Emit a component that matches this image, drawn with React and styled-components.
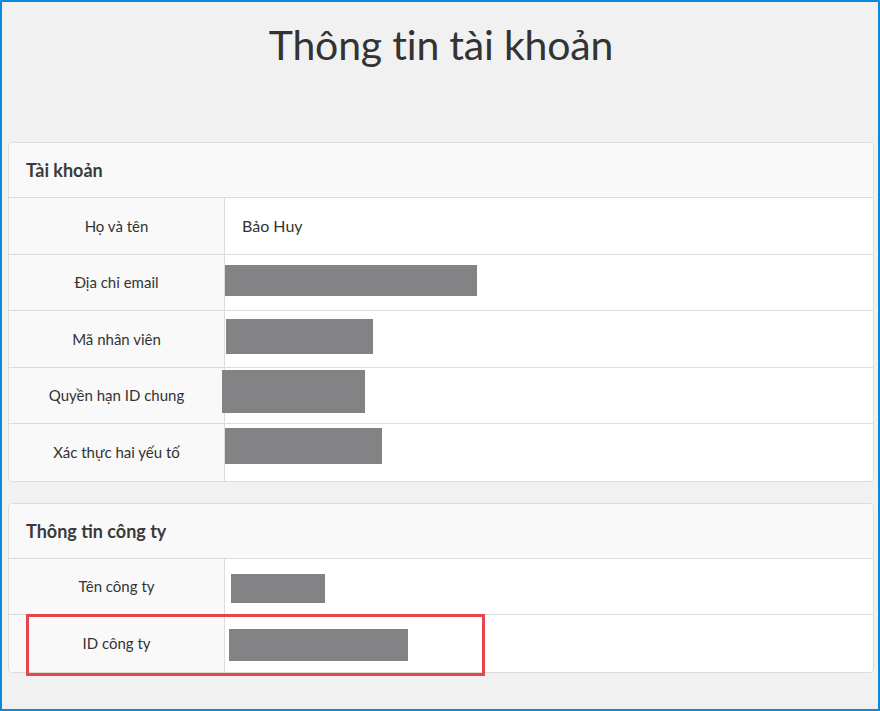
import React from "react";
import styled, { createGlobalStyle } from "styled-components";

const GlobalStyle = createGlobalStyle`
  html, body {
    margin: 0;
    padding: 0;
    background: #f1f1f1;
  }
  * {
    box-sizing: border-box;
  }
`;

// ================== Styled Components ==================
const Frame = styled.div`
  min-height: 100vh;
  border: 2px solid #0d87dc;
  background: #f1f1f1;
  padding: 0 4px 0 6px;
  font-family: Lato, "Noto Sans", sans-serif;
  color: #333;
`;

const Title = styled.h1`
  margin: 0;
  height: 140px;
  padding-top: 18px;
  text-align: center;
  font-size: 41px;
  font-weight: 400;
  color: #333;
  letter-spacing: -0.2px;
`;

const Card = styled.section`
  position: relative;
  background: #fff;
  border: 1px solid #dddddd;
  border-radius: 4px;
  margin-bottom: ${(p) => p.gap || 0}px;
`;

const CardHeader = styled.div`
  height: 55px;
  display: flex;
  align-items: center;
  padding-left: 17px;
  background: #f9f9f9;
  border-bottom: 1px solid #dddddd;
  border-radius: 4px 4px 0 0;
  font-size: 18px;
  font-weight: 700;
  color: #3a3a3a;
`;

const Row = styled.div`
  display: grid;
  grid-template-columns: 216px 1fr;
  height: 56.5px;
  border-bottom: ${(p) => (p.last ? "none" : "1px solid #dddddd")};
`;

const Label = styled.div`
  display: flex;
  align-items: center;
  justify-content: center;
  background: #f9f9f9;
  border-right: 1px solid #dddddd;
  font-size: 15px;
  color: #333;
  border-radius: ${(p) => (p.last ? "0 0 0 4px" : "0")};
`;

const Value = styled.div`
  position: relative;
  display: flex;
  align-items: center;
  padding-left: 17px;
  font-size: 16px;
  color: #333;
`;

// redaction overlay over the value
const Redact = styled.div`
  position: absolute;
  background: #838386;
`;

const Highlight = styled.div`
  position: absolute;
  left: 17px;
  bottom: -4px;
  width: 459px;
  height: 62px;
  border: 3px solid #e5454c;
  pointer-events: none;
`;

// ================== Data ==================
const account = [
  { label: "Họ và tên", value: "Bảo Huy" },
  { label: "Địa chỉ email", box: [0, 10, 252, 31] },
  { label: "Mã nhân viên", box: [1, 8, 147, 35] },
  { label: "Quyền hạn ID chung", box: [-3, 2, 143, 43] },
  { label: "Xác thực hai yếu tố", box: [0, 4, 157, 36] },
];

const company = [
  { label: "Tên công ty", box: [6, 15, 94, 29] },
  { label: "ID công ty", box: [4, 14, 179, 32] },
];

const renderRows = (rows) =>
  rows.map((r, i) => {
    const last = i === rows.length - 1;
    return (
      <Row key={r.label} last={last}>
        <Label last={last}>{r.label}</Label>
        <Value>
          {r.value}
          {r.box && (
            <Redact
              style={{
                left: r.box[0],
                top: r.box[1],
                width: r.box[2],
                height: r.box[3],
              }}
            />
          )}
        </Value>
      </Row>
    );
  });

// ================== Component ==================
const App = () => {
  return (
    <>
      <GlobalStyle />
      <Frame>
        <Title>Thông tin tài khoản</Title>

        <Card gap={21}>
          <CardHeader>Tài khoản</CardHeader>
          {renderRows(account)}
        </Card>

        <Card>
          <CardHeader>Thông tin công ty</CardHeader>
          {renderRows(company)}
          <Highlight />
        </Card>
      </Frame>
    </>
  );
};

export default App;
